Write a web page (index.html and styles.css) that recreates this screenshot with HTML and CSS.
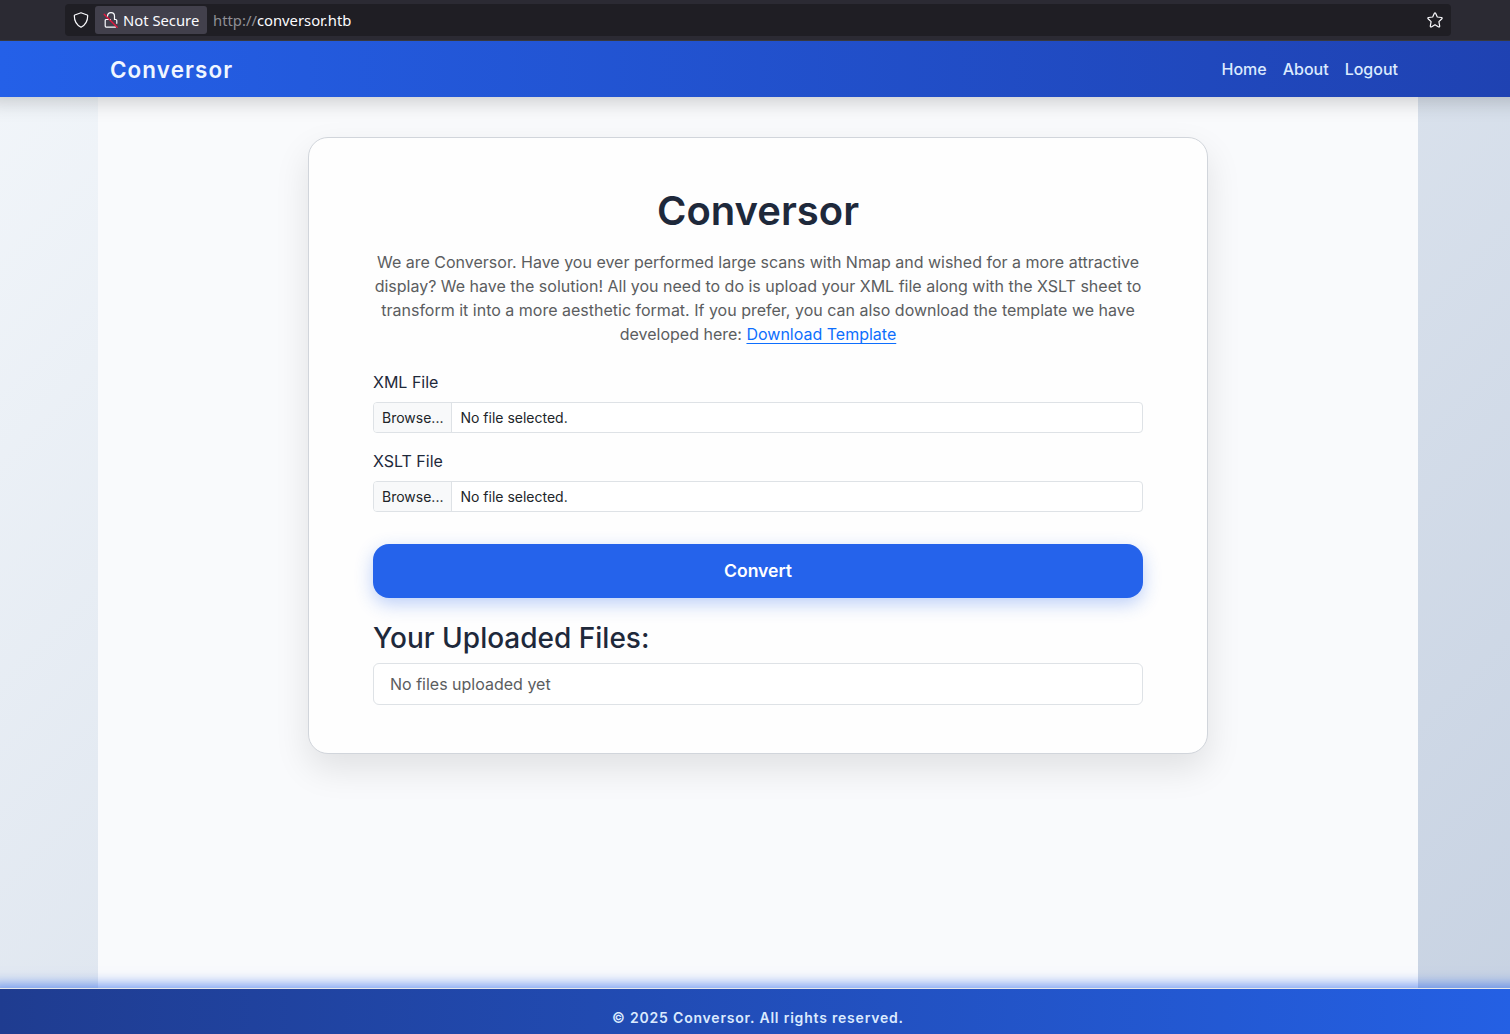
FILE: index.html
```html
<!DOCTYPE html>
<html lang="en">
<head>
    <meta charset="UTF-8">
    <meta name="viewport" content="width=device-width, initial-scale=1.0">
    <title>Conversor</title>
    <link rel="stylesheet" href="styles.css">
</head>
<body>
    <div class="browser-bar">
        <div class="address">
            <svg class="shield" width="16" height="16" viewBox="0 0 16 16" fill="none" stroke="#fbfbfe" stroke-width="1.2" stroke-linejoin="round">
                <path d="M8 .8 14.2 3a.8.8 0 0 1 .5.8C14.7 9.500 12.500 13 8 15.300 3.500 13 1.300 9.500 1.300 3.800a.8.8 0 0 1 .5-.8z"/>
            </svg>
            <div class="not-secure">
                <svg width="16" height="16" viewBox="0 0 16 16" fill="none" stroke="#fbfbfe" stroke-width="1.2" stroke-linecap="round" stroke-linejoin="round">
                    <path d="M4.500 4.300C4.600 2 6 .7 8 .7s3.500 1.400 3.500 3.500v3.300h1.300c.6 0 1 .4 1 1v2.800M7.500 7.500H3.200c-.6 0-1 .4-1 1v5.600c0 .6.4 1 1 1h9.300"/>
                    <path d="M1.200 2.300 14.200 15.300" stroke="#e8173f" stroke-width="1.300"/>
                </svg>
                <span>Not Secure</span>
            </div>
            <p class="url">http://<span>conversor.htb</span></p>
            <svg width="16" height="16" viewBox="0 0 16 16" fill="none" stroke="#fbfbfe" stroke-width="1.200" stroke-linejoin="round">
                <path d="M8 .9c.3 0 .5.200.6.400l1.700 3.700 4.200.5c.7.1.9.8.4 1.200l-3 2.900.8 4.600c.1.6-.5 1-1 .7L8 12.700l-3.700 2.200c-.5.300-1.100-.1-1-.7l.8-4.600-3-2.900c-.5-.4-.3-1.100.4-1.200l4.200-.5 1.700-3.700c.1-.2.300-.4.6-.4z"/>
            </svg>
        </div>
    </div>
    <div class="page">
        <nav class="navbar">
            <div class="nav">
                <a class="brand" href="#">Conversor</a>
                <ul class="links">
                    <li><a href="#">Home</a></li>
                    <li><a href="#">About</a></li>
                    <li><a href="#">Logout</a></li>
                </ul>
            </div>
        </nav>
        <div class="container">
            <div class="card">
                <h1>Conversor</h1>
                <p class="intro">We are Conversor. Have you ever performed large scans with Nmap and wished for a more attractive display? We have the solution! All you need to do is upload your XML file along with the XSLT sheet to transform it into a more aesthetic format. If you prefer, you can also download the template we have developed here: <a href="#">Download Template</a></p>
                <form>
                    <div class="field">
                        <p>XML File</p>
                        <div class="file-input">
                            <span class="browse">Browse...</span>
                            <span class="file-name">No file selected.</span>
                        </div>
                    </div>
                    <div class="field">
                        <p>XSLT File</p>
                        <div class="file-input">
                            <span class="browse">Browse...</span>
                            <span class="file-name">No file selected.</span>
                        </div>
                    </div>
                    <button class="btn" type="button">Convert</button>
                </form>
                <h3>Your Uploaded Files:</h3>
                <ul class="files">
                    <li>No files uploaded yet</li>
                </ul>
            </div>
        </div>
        <footer class="footer">
            <p>© 2025 Conversor. All rights reserved.</p>
        </footer>
    </div>
</body>
</html>
```
FILE: styles.css
```css
* {
    margin: 0;
    padding: 0;
    box-sizing: border-box;
}

body {
    height: 1034px;
    overflow: hidden;
    font-family: Inter, sans-serif;
    font-size: 16px;
    line-height: 1.5;
    color: #1e293b;
}

ul {
    list-style-type: none;
}

.browser-bar {
    position: relative;
    z-index: 1;
    height: 41px;
    padding: 4px 59px 4px 65px;
    background-color: #2b2a33;
    border-bottom: 1px solid #38383d;
}

.address {
    display: flex;
    height: 32px;
    align-items: center;
    padding: 0 8px;
    border-radius: 4px;
    background-color: #1f1e24;
    color: #fbfbfe;
    font-family: "Noto Sans", sans-serif;
    font-size: 14.8px;
}

.not-secure {
    display: flex;
    width: 112px;
    height: 28px;
    align-items: center;
    gap: 4px;
    margin-left: 6px;
    padding-left: 8px;
    border-radius: 3px;
    background-color: #42404c;
    white-space: nowrap;
}

.url {
    flex: 1;
    margin-left: 6px;
    color: #8f8f95;
}

.url span {
    color: #fbfbfe;
}

/* page is a little wider than the window */
.page {
    display: flex;
    flex-direction: column;
    width: 1516px;
    height: 993px;
    background: linear-gradient(135deg, #f2f6fa, #c7d2e2);
}

.navbar {
    position: relative;
    height: 56px;
    background: linear-gradient(90deg, #2460e8, #1f42b2);
    box-shadow: 0 -12px 20px 16px rgba(0, 0, 0, 0.2);
}

.nav {
    display: flex;
    width: 1320px;
    height: 100%;
    margin: 0 auto;
    padding: 0 20px 0 12px;
    align-items: center;
    justify-content: space-between;
}

.brand {
    padding-top: 2px;
    color: #f0f6ff;
    font-size: 22.4px;
    font-weight: 600;
    letter-spacing: 1.12px;
    text-decoration: none;
}

.links {
    display: flex;
    gap: 16px;
}

.links a {
    color: #dbeafe;
    font-weight: 500;
    text-decoration: none;
}

.container {
    flex: 1;
    width: 1320px;
    margin: 0 auto;
    padding-top: 40px;
    background-color: #f9fafc;
}

.card {
    width: 900px;
    margin: 0 auto;
    padding: 48px 64px;
    border: 1px solid #d1d5db;
    border-radius: 20px;
    background-color: #fefefe;
    box-shadow: 0 15px 35px rgba(0, 0, 0, 0.1);
}

h1 {
    padding-top: 1px;
    margin-bottom: 15px;
    font-size: 40px;
    font-weight: 600;
    line-height: 1.2;
    text-align: center;
}

.intro {
    margin-bottom: 24px;
    color: #5b5d60;
    text-align: center;
}

.intro a {
    color: #0d6efd;
    text-decoration-thickness: 1px;
    text-underline-offset: 3px;
}

.field {
    margin-bottom: 16px;
}

.field p {
    margin-bottom: 8px;
}

.file-input {
    display: flex;
    height: 31px;
    border: 1px solid #dee2e6;
    border-radius: 4px;
    overflow: hidden;
    background-color: #fff;
    color: #212529;
    font-size: 14px;
    line-height: 29px;
}

.browse {
    padding: 0 8px;
    border-right: 1px solid #dee2e6;
    background-color: #f8f9fa;
}

.file-name {
    padding-left: 8px;
}

.btn {
    display: block;
    width: 100%;
    height: 54px;
    margin: 32px 0 24px;
    padding-bottom: 2px;
    border: none;
    border-radius: 16px;
    background-color: #2563eb;
    box-shadow: 0 6px 18px rgba(37, 99, 235, 0.3);
    color: #fff;
    font-family: inherit;
    font-size: 17.6px;
    font-weight: 600;
}

h3 {
    margin-bottom: 7.4px;
    font-size: 28px;
    font-weight: 500;
    line-height: 1.2;
}

.files {
    padding: 8px 16px;
    border: 1px solid #dee2e6;
    border-radius: 6px;
    background-color: #fff;
    color: #5b5d60;
}

.footer {
    position: relative;
    height: 46px;
    padding-top: 17px;
    border-top: 1px solid #e5e7eb;
    background: linear-gradient(90deg, #1f3c90, #2460e4) padding-box;
    box-shadow: 0 6px 12px 10px rgba(37, 99, 235, 0.6);
    color: #dbeafe;
    text-align: center;
}

.footer p {
    font-size: 14px;
    font-weight: 600;
    line-height: 24px;
    letter-spacing: 0.8px;
}
```
